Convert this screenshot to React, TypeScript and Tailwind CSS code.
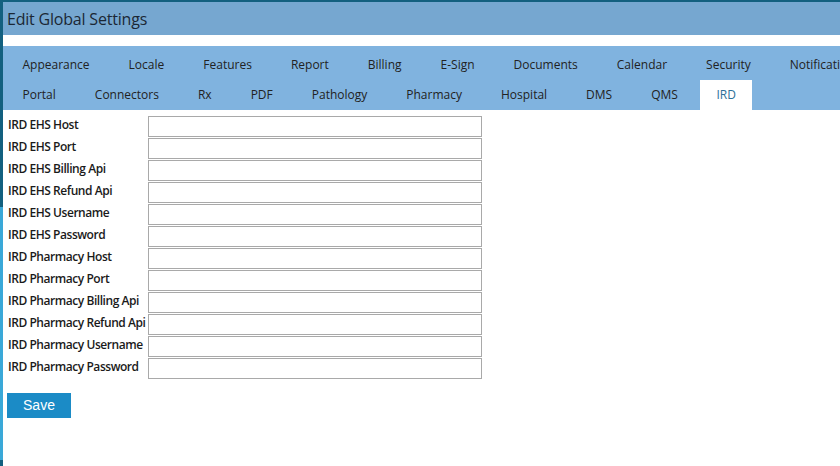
import React from 'react';

const row1 = ['Appearance', 'Locale', 'Features', 'Report', 'Billing', 'E-Sign', 'Documents', 'Calendar', 'Security', 'Notifications'];
const row2 = ['Portal', 'Connectors', 'Rx', 'PDF', 'Pathology', 'Pharmacy', 'Hospital', 'DMS', 'QMS', 'IRD'];

const fields = [
  'IRD EHS Host',
  'IRD EHS Port',
  'IRD EHS Billing Api',
  'IRD EHS Refund Api',
  'IRD EHS Username',
  'IRD EHS Password',
  'IRD Pharmacy Host',
  'IRD Pharmacy Port',
  'IRD Pharmacy Billing Api',
  'IRD Pharmacy Refund Api',
  'IRD Pharmacy Username',
  'IRD Pharmacy Password',
];

export default function App() {
  return (
    <div className="w-[840px] h-[466px] overflow-hidden bg-white flex flex-col" style={{ fontFamily: '"Open Sans", "Noto Sans", sans-serif' }}>
      <div className="h-[2px] bg-[#13607f] shrink-0" />
      <div className="flex flex-1 min-h-0">
        {/* left stripe */}
        <div className="w-[3px] flex flex-col shrink-0">
          <div className="h-[205px] bg-[#13607f]" />
          <div className="flex-1 bg-[#3aa8d8]" />
          <div className="h-[6px] bg-[#13607f]" />
        </div>

        <div className="flex-1 min-w-0 flex flex-col">
          {/* header */}
          <div className="h-[33px] bg-[#76a7d0] flex items-center pl-[4px]">
            <h1 className="text-[16px] text-[#1b2735] whitespace-nowrap tracking-[-0.2px]">Edit Global Settings</h1>
          </div>
          <div className="h-[11px]" />

          {/* tabs */}
          <div className="bg-[#80b3df] pt-[4px] text-[12px] text-[#222] overflow-hidden">
            <div className="flex h-[30px] items-center whitespace-nowrap">
              {row1.map((t) => (
                <div key={t} className="px-[19.5px] h-full flex items-center shrink-0">{t}</div>
              ))}
            </div>
            <div className="flex h-[30px] items-center whitespace-nowrap">
              {row2.map((t) => (
                <div
                  key={t}
                  className={`h-full flex items-center shrink-0 ${t === 'IRD' ? 'bg-white text-[#2e6f98] px-[16px] ml-[3px]' : 'px-[19.5px]'}`}
                >
                  {t}
                </div>
              ))}
            </div>
          </div>

          {/* form */}
          <div className="pl-[5px] pt-[5px]">
            {fields.map((f) => (
              <div key={f} className="flex items-center h-[22px]">
                <label className="w-[140px] pb-[3px] text-[12px] font-semibold text-[#1a1a1a] whitespace-nowrap tracking-[-0.45px]">{f}</label>
                <input className="w-[334px] h-[21px] border border-[#a9a9a9] bg-white outline-none" />
              </div>
            ))}
            <button className="mt-[14px] ml-[-1px] w-[64px] h-[25px] bg-[#1b8bc6] text-white text-[14px]" style={{ fontFamily: '"Liberation Sans", Arial, sans-serif' }}>
              Save
            </button>
          </div>
        </div>
      </div>
    </div>
  );
}
